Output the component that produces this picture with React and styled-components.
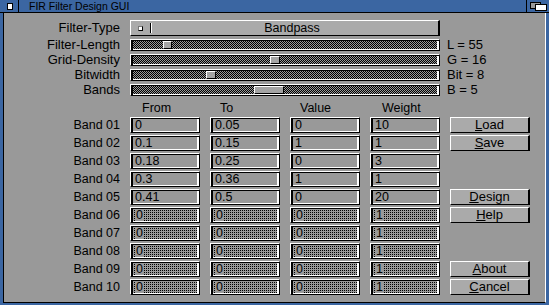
import React from 'react';
import styled, { createGlobalStyle, css } from 'styled-components';

const GlobalStyle = createGlobalStyle`
  html, body {
    margin: 0;
    padding: 0;
    background: #3b66a2;
  }
  body {
    font-family: "Liberation Sans", Arial, sans-serif;
    color: #000;
  }
`;

const sliders = [
  { label: 'Filter-Length', value: 'L = 55', left: 32, width: 9 },
  { label: 'Grid-Density', value: 'G = 16', left: 139, width: 10 },
  { label: 'Bitwidth', value: 'Bit = 8', left: 75, width: 10 },
  { label: 'Bands', value: 'B = 5', left: 123, width: 30 },
];

const bands = [
  ['0', '0.05', '0', '10'],
  ['0.1', '0.15', '1', '1'],
  ['0.18', '0.25', '0', '3'],
  ['0.3', '0.36', '1', '1'],
  ['0.41', '0.5', '0', '20'],
  ['0', '0', '0', '1'],
  ['0', '0', '0', '1'],
  ['0', '0', '0', '1'],
  ['0', '0', '0', '1'],
  ['0', '0', '0', '1'],
];

const buttons = [
  { text: 'Load', row: 2 },
  { text: 'Save', row: 3 },
  { text: 'Design', row: 6 },
  { text: 'Help', row: 7 },
  { text: 'About', row: 10 },
  { text: 'Cancel', row: 11 },
];

function App() {
  return (
    <>
      <GlobalStyle />
      <Window>
        <TitleBar>
          <CloseGadget>
            <CloseBox />
          </CloseGadget>
          <Title>FIR Filter Design GUI</Title>
          <DepthGadget>
            <svg width="17" height="9" viewBox="0 0 17 9">
              <rect x="0.5" y="0.5" width="10" height="6" fill="#999" stroke="#000" />
              <rect x="5.5" y="2.5" width="11" height="6" fill="#fff" stroke="#000" />
            </svg>
          </DepthGadget>
        </TitleBar>
        <Body>
          <TopGrid>
            <Label $big>Filter-Type</Label>
            <Cycle>
              <CycleIcon />
              <CycleDivider />
              <CycleText>Bandpass</CycleText>
            </Cycle>
            <span />
            {sliders.map(s => (
              <React.Fragment key={s.label}>
                <Label $big>{s.label}</Label>
                <Slider>
                  <Knob style={{ left: s.left, width: s.width }} />
                </Slider>
                <SliderValue>{s.value}</SliderValue>
              </React.Fragment>
            ))}
          </TopGrid>
          <BandGrid>
            <span />
            <Header>From</Header>
            <Header $pad={10}>To</Header>
            <Header $pad={10}>Value</Header>
            <Header>Weight</Header>
            <span />
            {bands.map((row, i) => {
              const ghost = i >= 5;
              const n = String(i + 1).padStart(2, '0');
              return (
                <React.Fragment key={n}>
                  <Label style={{ gridColumn: 1 }}>Band {n}</Label>
                  {row.map((v, j) => (
                    <StringBox key={j} $ghost={ghost}>
                      {ghost ? <GhostChar>{v}</GhostChar> : v}
                    </StringBox>
                  ))}
                </React.Fragment>
              );
            })}
            {buttons.map(b => (
              <Button key={b.text} $row={b.row}>
                <u>{b.text[0]}</u>{b.text.slice(1)}
              </Button>
            ))}
          </BandGrid>
        </Body>
      </Window>
    </>
  );
}

const raised = css`
  border-style: solid;
  border-color: #fff #000 #000 #fff;
  border-width: 1px 2px 1px 1px;
`;

const ridge = css`
  border-style: solid;
  border-color: #fff #000 #000 #fff;
  border-width: 1px 1px 1px 1px;
  box-shadow: inset 2px 1px 0 #000, inset -2px -1px 0 #fff;
`;

const Window = styled.div`
  width: 549px;
  height: 305px;
  background: #3b66a2;
  display: flex;
  flex-direction: column;
  box-sizing: border-box;
`;

const TitleBar = styled.div`
  height: 12px;
  border-bottom: 1px solid #000;
  display: flex;
  align-items: stretch;
`;

const CloseGadget = styled.div`
  width: 18px;
  border-right: 1px solid #000;
  display: flex;
  align-items: center;
  justify-content: center;
`;

const CloseBox = styled.div`
  width: 4px;
  height: 5px;
  background: #fff;
  border: 1px solid #000;
  margin-left: 2px;
`;

const Title = styled.div`
  flex: 1;
  padding-left: 10px;
  font-size: 10.5px;
  line-height: 12px;
  color: #000;
`;

const DepthGadget = styled.div`
  width: 22px;
  border-left: 1px solid #000;
  display: flex;
  align-items: center;
  justify-content: center;
  padding-top: 1px;
`;

const Body = styled.div`
  flex: 1;
  margin: 0 3px 2px 3px;
  background: #999;
  border-left: 1px solid #000;
  border-right: 1px solid #fff;
  border-bottom: 1px solid #000;
  padding-top: 7px;
`;

const TopGrid = styled.div`
  display: grid;
  grid-template-columns: 116px 310px auto;
  grid-template-rows: 16px repeat(4, 12px);
  column-gap: 10px;
  row-gap: 3px;
  align-items: center;
`;

const Label = styled.div`
  text-align: right;
  font-size: ${p => (p.$big ? 13 : 12.5)}px;
  line-height: 14px;
  white-space: nowrap;
`;

const Cycle = styled.div`
  ${raised};
  height: 100%;
  box-sizing: border-box;
  background: #aaa;
  display: flex;
  align-items: center;
`;

const CycleIcon = styled.div`
  width: 3px;
  height: 3px;
  background: #fff;
  border: 1px solid #000;
  border-top-color: #777;
  border-left-color: #777;
  margin-left: 7px;
`;

const CycleDivider = styled.div`
  width: 1px;
  height: 10px;
  background: #000;
  border-right: 1px solid #fff;
  margin-left: 7px;
`;

const CycleText = styled.div`
  flex: 1;
  text-align: center;
  font-size: 12.5px;
  padding-right: 6px;
`;

const Slider = styled.div`
  ${ridge};
  position: relative;
  height: 100%;
  box-sizing: border-box;
  background: repeating-conic-gradient(#000 0 25%, #999 0 50%) 0 0 / 2px 2px;
`;

const Knob = styled.div`
  position: absolute;
  top: 1px;
  height: 8px;
  box-sizing: border-box;
  background: #a4a4a4;
  border-style: solid;
  border-width: 1px;
  border-color: #fff #000 #000 #fff;
`;

const SliderValue = styled.div`
  font-size: 13px;
  line-height: 14px;
  margin-left: -3px;
  white-space: nowrap;
`;

const BandGrid = styled.div`
  display: grid;
  grid-template-columns: 116px repeat(4, 70px) 80px;
  grid-template-rows: 16px repeat(10, 16px);
  column-gap: 10px;
  row-gap: 2px;
  margin-top: 3px;
  align-items: center;
`;

const Header = styled.div`
  font-size: 12.5px;
  padding-left: ${p => p.$pad ?? 12}px;
  line-height: 14px;
  margin-top: 2px;
`;

const StringBox = styled.div`
  ${ridge};
  height: 100%;
  box-sizing: border-box;
  padding-left: 4px;
  font-size: 12.5px;
  line-height: 14px;
  background: ${p =>
    p.$ghost
      ? 'conic-gradient(#000 0 25%, #999 0) 0 0 / 2px 2px'
      : '#999'};
  overflow: hidden;
  white-space: nowrap;
`;

const GhostChar = styled.span`
  display: inline-block;
  background: #999;
  padding: 0 1px;
  line-height: 12px;
  margin-top: 1px;
`;

const Button = styled.div`
  ${raised};
  grid-column: 6;
  grid-row: ${p => p.$row};
  height: 100%;
  box-sizing: border-box;
  background: #aaa;
  text-align: center;
  font-size: 13px;
  line-height: 14px;

  u {
    text-underline-offset: 1px;
  }
`;

export default App;
